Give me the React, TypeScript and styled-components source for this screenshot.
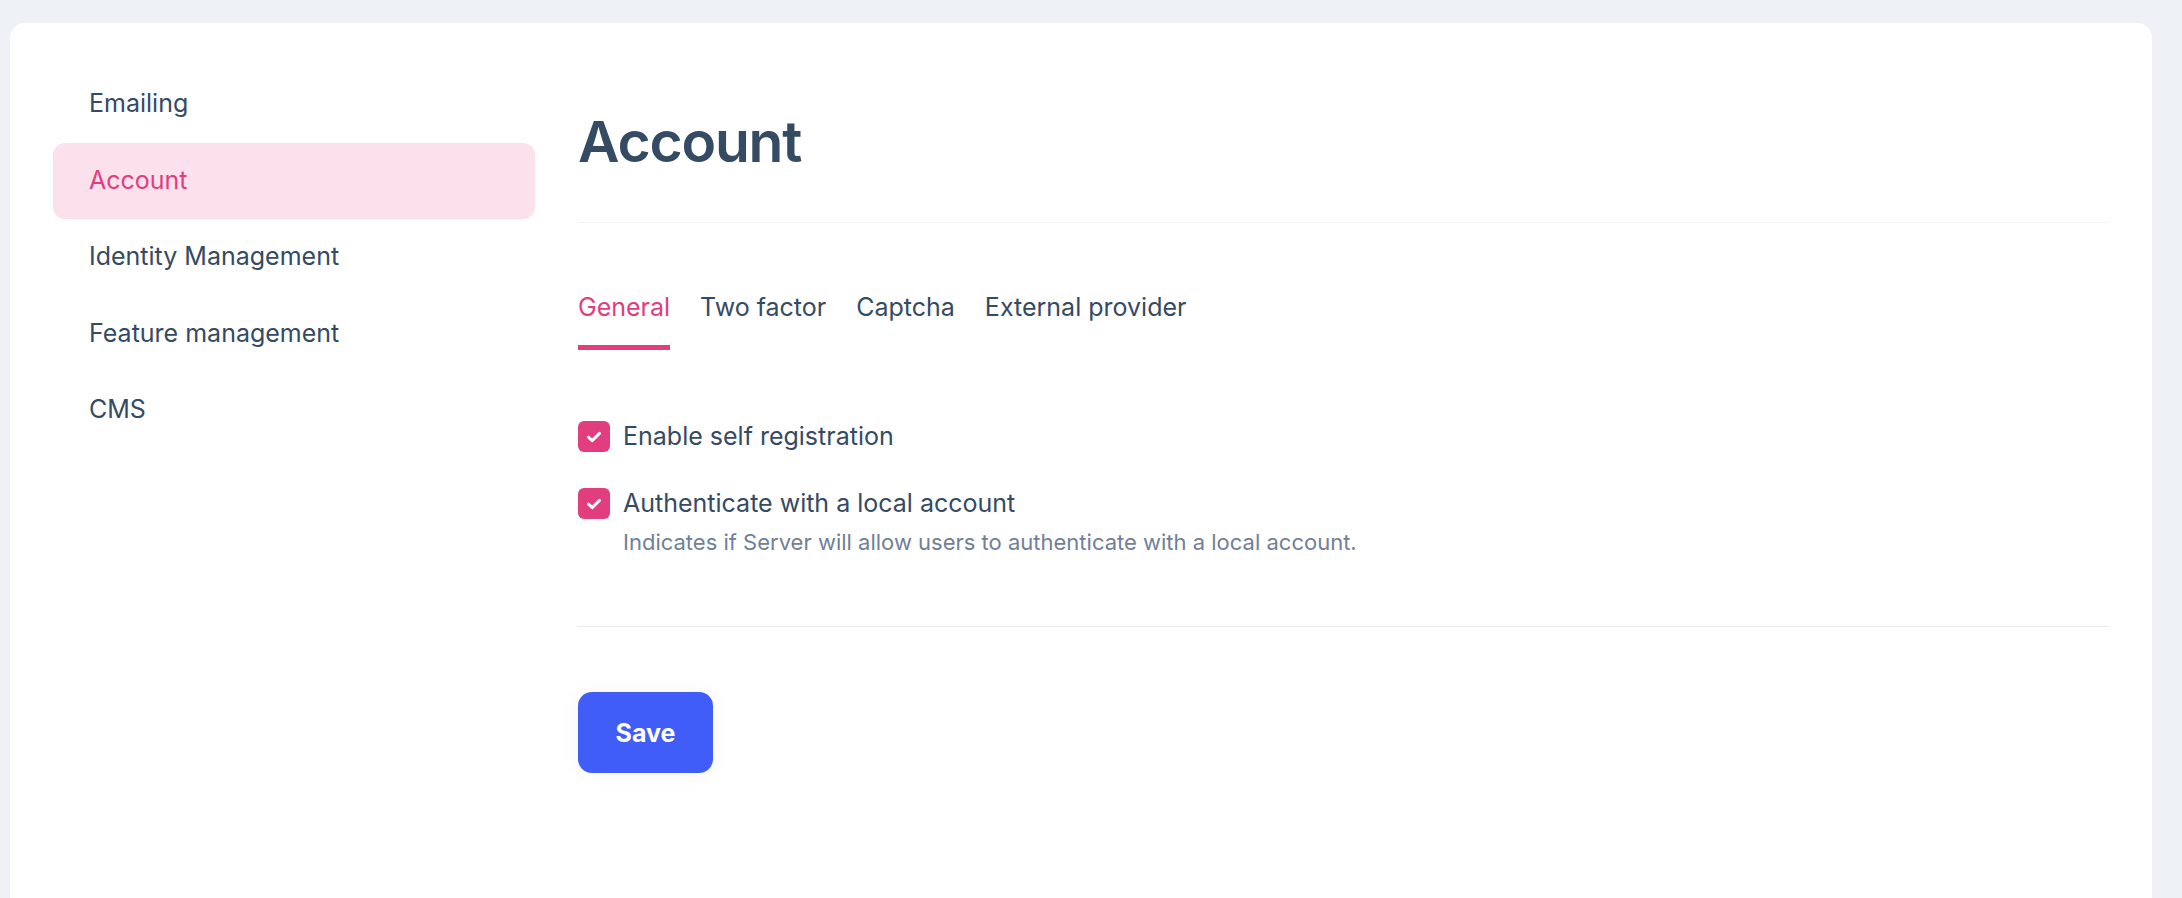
import React from 'react';
import styled, { createGlobalStyle } from 'styled-components';

const GlobalStyle = createGlobalStyle`
  html, body {
    margin: 0;
    padding: 0;
    overflow: hidden;
    background: #eef2f6;
    font-family: Inter, "Noto Sans", sans-serif;
  }
  * {
    box-sizing: border-box;
  }
`;

const navItems = ['Emailing', 'Account', 'Identity Management', 'Feature management', 'CMS'];
const tabs = ['General', 'Two factor', 'Captcha', 'External provider'];

const CheckIcon = () => (
  <svg width="16" height="12" viewBox="0 0 16 12" fill="none">
    <polyline
      points="2.5,6.2 6.2,9.6 13.5,2.4"
      stroke="#fff"
      strokeWidth="3"
      strokeLinecap="round"
      strokeLinejoin="round"
    />
  </svg>
);

const App = () => {
  return (
    <>
      <GlobalStyle />
      <Page>
        <Card>
          <Sidebar>
            {navItems.map((item) => (
              <NavItem key={item} $active={item === 'Account'}>
                {item}
              </NavItem>
            ))}
          </Sidebar>
          <Content>
            <Title>Account</Title>
            <Divider $tone="#f2f3f5" $top={45} />
            <TabList>
              {tabs.map((tab) => (
                <Tab key={tab} $active={tab === 'General'}>
                  {tab}
                </Tab>
              ))}
            </TabList>
            <Options>
              <Option>
                <CheckBox>
                  <CheckIcon />
                </CheckBox>
                <OptionLabel>Enable self registration</OptionLabel>
              </Option>
              <Option>
                <CheckBox>
                  <CheckIcon />
                </CheckBox>
                <div>
                  <OptionLabel>Authenticate with a local account</OptionLabel>
                  <OptionHint>Indicates if Server will allow users to authenticate with a local account.</OptionHint>
                </div>
              </Option>
            </Options>
            <Divider $tone="#e9ebee" $top={71} />
            <SaveButton type="button">Save</SaveButton>
          </Content>
        </Card>
      </Page>
    </>
  );
};

const Page = styled.div`
  display: flex;
  height: 100vh;
  padding: 23px 30px 0 10px;
`;

const Card = styled.div`
  flex: 1;
  display: flex;
  gap: 43px;
  padding: 43px 43px 0;
  background-color: #fff;
  border-radius: 15px 15px 0 0;
`;

const Sidebar = styled.nav`
  width: 482px;
  flex-shrink: 0;
  display: flex;
  flex-direction: column;
`;

const NavItem = styled.div<{ $active?: boolean }>`
  height: 76.5px;
  display: flex;
  align-items: center;
  padding: 0 36px 2px;
  font-size: 25px;
  color: ${(p) => (p.$active ? '#e23d7e' : '#354a63')};
  background-color: ${(p) => (p.$active ? '#fbe1eb' : 'transparent')};
  border-radius: 12px;
`;

const Content = styled.main`
  flex: 1;
  padding-top: 41px;
`;

const Title = styled.h1`
  margin: 0;
  font-size: 57px;
  font-weight: 600;
  line-height: 70px;
  letter-spacing: -1.2px;
  color: #354a63;
`;

const Divider = styled.hr<{ $tone: string; $top: number }>`
  margin: ${(p) => p.$top}px 0 0;
  border: none;
  height: 1px;
  background-color: ${(p) => p.$tone};
`;

const TabList = styled.div`
  display: flex;
  gap: 30px;
  margin-top: 69px;
`;

const Tab = styled.div<{ $active?: boolean }>`
  font-size: 25px;
  line-height: 30px;
  padding-bottom: 23px;
  color: ${(p) => (p.$active ? '#e23d7e' : '#354a63')};
  border-bottom: 5px solid ${(p) => (p.$active ? '#e23d7e' : 'transparent')};
`;

const Options = styled.div`
  display: flex;
  flex-direction: column;
  gap: 36px;
  margin-top: 71px;
`;

const Option = styled.div`
  display: flex;
  align-items: flex-start;
  gap: 13px;
`;

const CheckBox = styled.span`
  width: 32px;
  height: 31px;
  flex-shrink: 0;
  display: flex;
  align-items: center;
  justify-content: center;
  border-radius: 6px;
  background-color: #e23d7e;
`;

const OptionLabel = styled.div`
  font-size: 25px;
  line-height: 30px;
  color: #354a63;
`;

const OptionHint = styled.div`
  margin-top: 12px;
  font-size: 22px;
  line-height: 25px;
  color: #718096;
`;

const SaveButton = styled.button`
  margin-top: 65px;
  width: 135px;
  height: 81px;
  border: none;
  border-radius: 14px;
  background-color: #405ef7;
  color: #fff;
  font-family: Inter, "Noto Sans", sans-serif;
  font-size: 25px;
  font-weight: 700;
  box-shadow: 0 0 24px rgba(30, 41, 59, 0.04);
  cursor: pointer;
`;

export default App;
